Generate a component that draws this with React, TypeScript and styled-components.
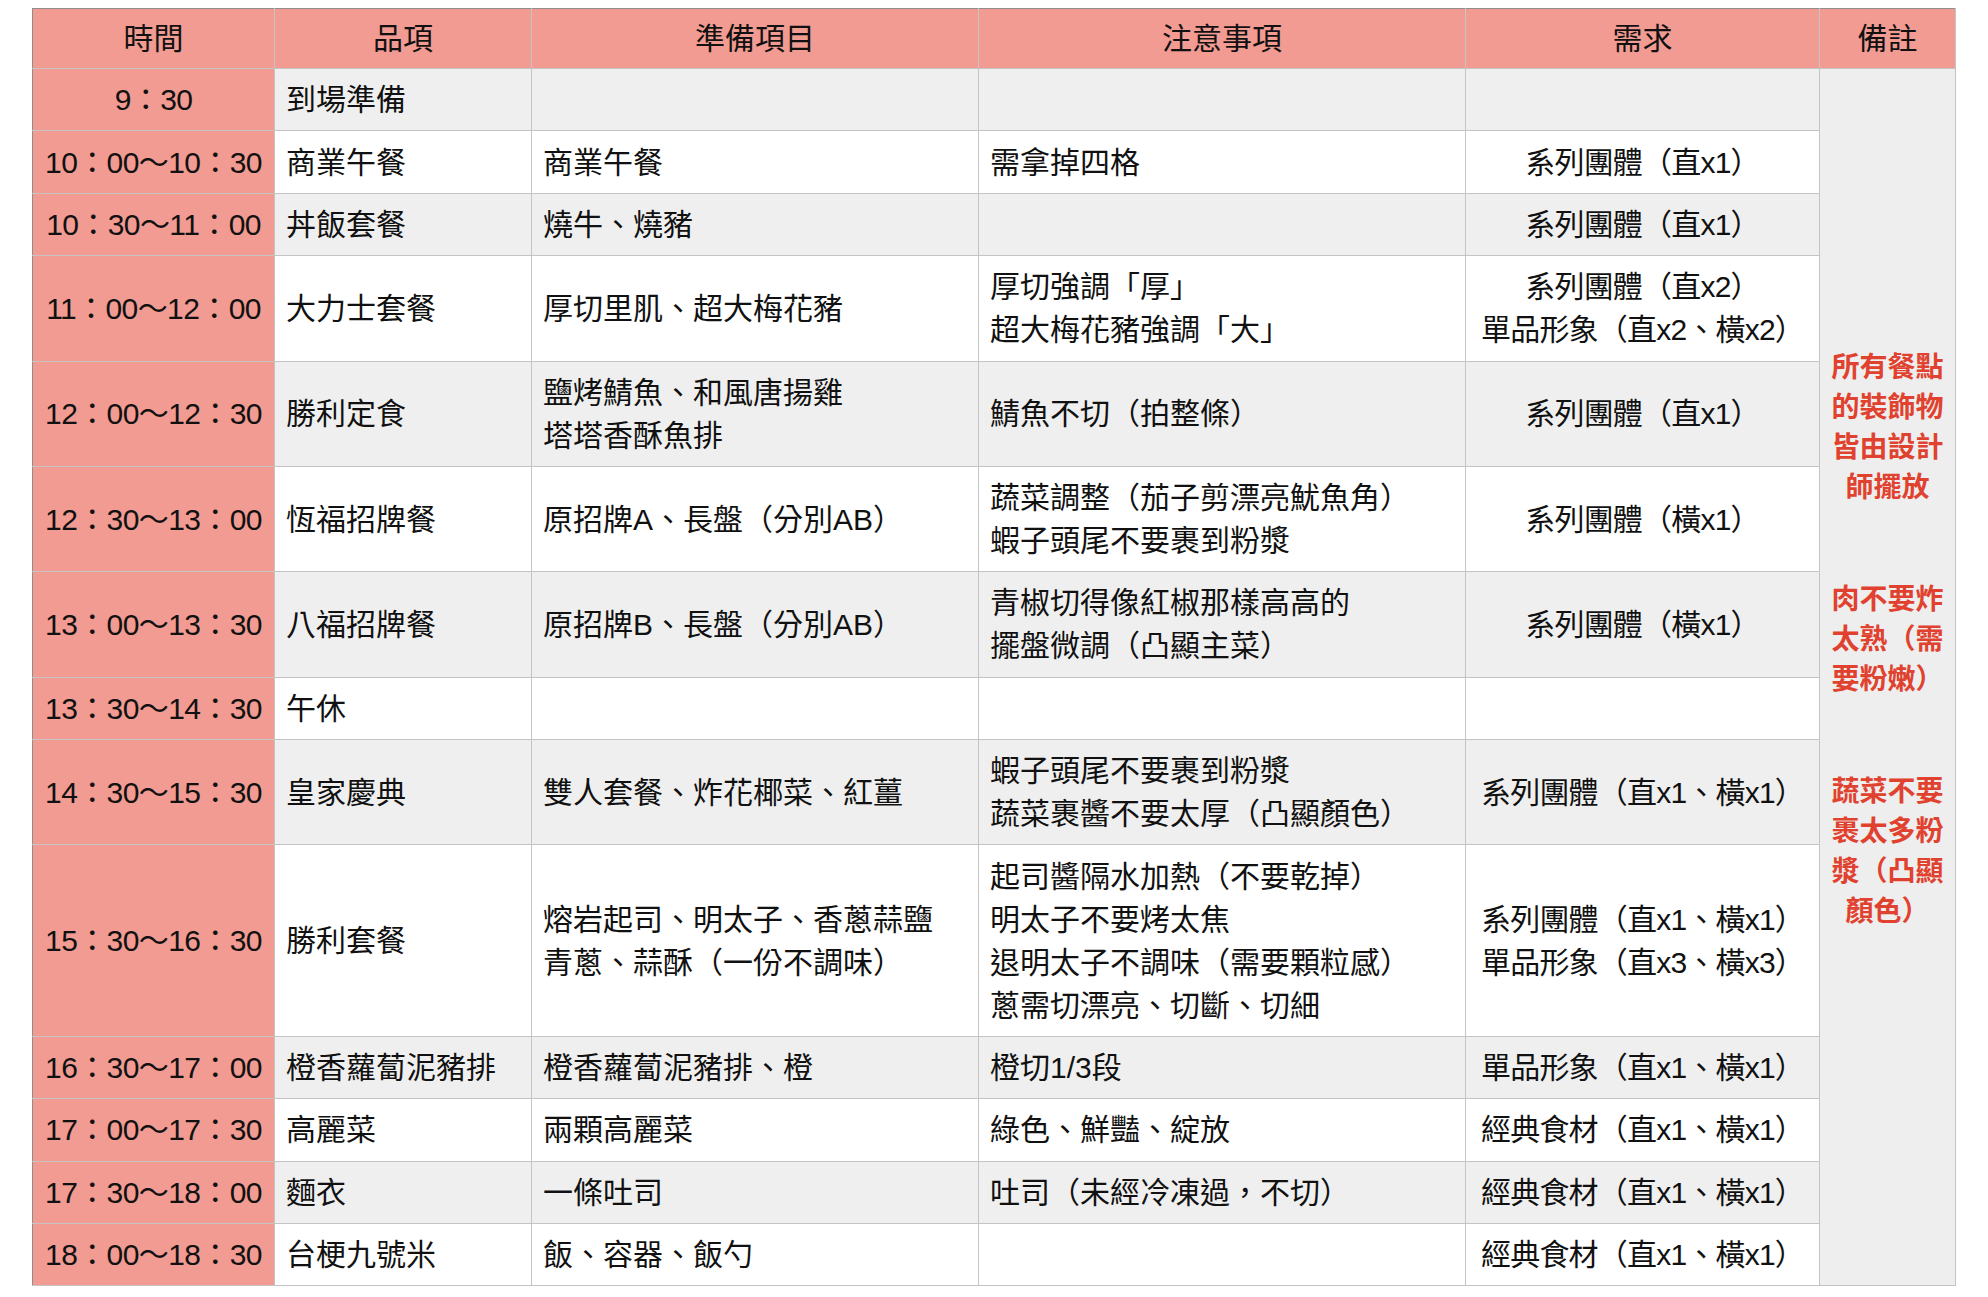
import React from "react";
import styled, { createGlobalStyle } from "styled-components";

const Global = createGlobalStyle`
  html, body { margin: 0; padding: 0; background: #ffffff; }
  body { font-family: "Liberation Sans", "Noto Sans CJK TC", sans-serif; }
`;

const Page = styled.div`
  padding: 8px 0 0 32px;
`;

const Table = styled.table`
  border-collapse: collapse;
  table-layout: fixed;
  width: 1923px;
  font-family: "Liberation Sans", "Noto Sans CJK TC", sans-serif;
  font-size: 30px;
  line-height: 43px;
  color: #111111;
`;

const HeadCell = styled.th<{ $first?: boolean }>`
  background: #f29b92;
  font-weight: 400;
  text-align: center;
  vertical-align: middle;
  height: 60px;
  padding: 0 11px;
  box-sizing: border-box;
  border: 1px solid #c4c4c4;
  border-top-color: #8e8e8e;
  border-left-color: ${(p) => (p.$first ? "#8e8e8e" : "#c4c4c4")};
  white-space: nowrap;
`;

const Row = styled.tr<{ $shade: boolean }>`
  background: ${(p) => (p.$shade ? "#efefef" : "#ffffff")};
`;

const TimeCell = styled.td`
  background: #f29b92;
  text-align: center;
  vertical-align: middle;
  padding: 9.2px 8px;
  border: 1px solid #c4c4c4;
  border-left-color: #8e8e8e;
  white-space: nowrap;
  letter-spacing: -0.6px;
`;

const Cell = styled.td<{ $center?: boolean }>`
  text-align: ${(p) => (p.$center ? "center" : "left")};
  vertical-align: middle;
  padding: 9.2px 11px;
  border: 1px solid #c4c4c4;
  white-space: nowrap;
  letter-spacing: ${(p) => (p.$center ? "-0.8px" : "0")};
`;

const NoteCell = styled.td`
  background: #eeeeee;
  text-align: center;
  vertical-align: middle;
  padding: 0 4px 74px;
  border: 1px solid #c4c4c4;
`;

const NoteBlock = styled.div`
  color: #e0422f;
  font-weight: 700;
  font-size: 28px;
  line-height: 40px;
  & + & {
    margin-top: 72px;
  }
`;

const Line = styled.span`
  display: block;
  white-space: nowrap;
`;

type RowData = {
  time: string;
  item: string;
  prep: string[];
  notes: string[];
  need: string[];
};

const rows: RowData[] = [
  { time: "9：30", item: "到場準備", prep: [], notes: [], need: [] },
  { time: "10：00～10：30", item: "商業午餐", prep: ["商業午餐"], notes: ["需拿掉四格"], need: ["系列團體（直x1）"] },
  { time: "10：30～11：00", item: "丼飯套餐", prep: ["燒牛、燒豬"], notes: [], need: ["系列團體（直x1）"] },
  {
    time: "11：00～12：00",
    item: "大力士套餐",
    prep: ["厚切里肌、超大梅花豬"],
    notes: ["厚切強調「厚」", "超大梅花豬強調「大」"],
    need: ["系列團體（直x2）", "單品形象（直x2、橫x2）"],
  },
  {
    time: "12：00～12：30",
    item: "勝利定食",
    prep: ["鹽烤鯖魚、和風唐揚雞", "塔塔香酥魚排"],
    notes: ["鯖魚不切（拍整條）"],
    need: ["系列團體（直x1）"],
  },
  {
    time: "12：30～13：00",
    item: "恆福招牌餐",
    prep: ["原招牌A、長盤（分別AB）"],
    notes: ["蔬菜調整（茄子剪漂亮魷魚角）", "蝦子頭尾不要裹到粉漿"],
    need: ["系列團體（橫x1）"],
  },
  {
    time: "13：00～13：30",
    item: "八福招牌餐",
    prep: ["原招牌B、長盤（分別AB）"],
    notes: ["青椒切得像紅椒那樣高高的", "擺盤微調（凸顯主菜）"],
    need: ["系列團體（橫x1）"],
  },
  { time: "13：30～14：30", item: "午休", prep: [], notes: [], need: [] },
  {
    time: "14：30～15：30",
    item: "皇家慶典",
    prep: ["雙人套餐、炸花椰菜、紅薑"],
    notes: ["蝦子頭尾不要裹到粉漿", "蔬菜裹醬不要太厚（凸顯顏色）"],
    need: ["系列團體（直x1、橫x1）"],
  },
  {
    time: "15：30～16：30",
    item: "勝利套餐",
    prep: ["熔岩起司、明太子、香蔥蒜鹽", "青蔥、蒜酥（一份不調味）"],
    notes: ["起司醬隔水加熱（不要乾掉）", "明太子不要烤太焦", "退明太子不調味（需要顆粒感）", "蔥需切漂亮、切斷、切細"],
    need: ["系列團體（直x1、橫x1）", "單品形象（直x3、橫x3）"],
  },
  {
    time: "16：30～17：00",
    item: "橙香蘿蔔泥豬排",
    prep: ["橙香蘿蔔泥豬排、橙"],
    notes: ["橙切1/3段"],
    need: ["單品形象（直x1、橫x1）"],
  },
  { time: "17：00～17：30", item: "高麗菜", prep: ["兩顆高麗菜"], notes: ["綠色、鮮豔、綻放"], need: ["經典食材（直x1、橫x1）"] },
  { time: "17：30～18：00", item: "麵衣", prep: ["一條吐司"], notes: ["吐司（未經冷凍過，不切）"], need: ["經典食材（直x1、橫x1）"] },
  { time: "18：00～18：30", item: "台梗九號米", prep: ["飯、容器、飯勺"], notes: [], need: ["經典食材（直x1、橫x1）"] },
];

const remarks: string[][] = [
  ["所有餐點", "的裝飾物", "皆由設計", "師擺放"],
  ["肉不要炸", "太熟（需", "要粉嫩）"],
  ["蔬菜不要", "裹太多粉", "漿（凸顯", "顏色）"],
];

const Lines = ({ items }: { items: string[] }) => (
  <>
    {items.map((t, i) => (
      <Line key={i}>{t}</Line>
    ))}
  </>
);

export default function App() {
  return (
    <>
      <Global />
      <Page>
        <Table>
          <colgroup>
            <col style={{ width: 242 }} />
            <col style={{ width: 257 }} />
            <col style={{ width: 447 }} />
            <col style={{ width: 487 }} />
            <col style={{ width: 354 }} />
            <col style={{ width: 136 }} />
          </colgroup>
          <thead>
            <tr>
              <HeadCell $first>時間</HeadCell>
              <HeadCell>品項</HeadCell>
              <HeadCell>準備項目</HeadCell>
              <HeadCell>注意事項</HeadCell>
              <HeadCell>需求</HeadCell>
              <HeadCell>備註</HeadCell>
            </tr>
          </thead>
          <tbody>
            {rows.map((r, i) => (
              <Row key={r.time} $shade={i % 2 === 0}>
                <TimeCell>{r.time}</TimeCell>
                <Cell>{r.item}</Cell>
                <Cell>
                  <Lines items={r.prep} />
                </Cell>
                <Cell>
                  <Lines items={r.notes} />
                </Cell>
                <Cell $center>
                  <Lines items={r.need} />
                </Cell>
                {i === 0 && (
                  <NoteCell rowSpan={rows.length}>
                    {remarks.map((b, j) => (
                      <NoteBlock key={j}>
                        <Lines items={b} />
                      </NoteBlock>
                    ))}
                  </NoteCell>
                )}
              </Row>
            ))}
          </tbody>
        </Table>
      </Page>
    </>
  );
}
